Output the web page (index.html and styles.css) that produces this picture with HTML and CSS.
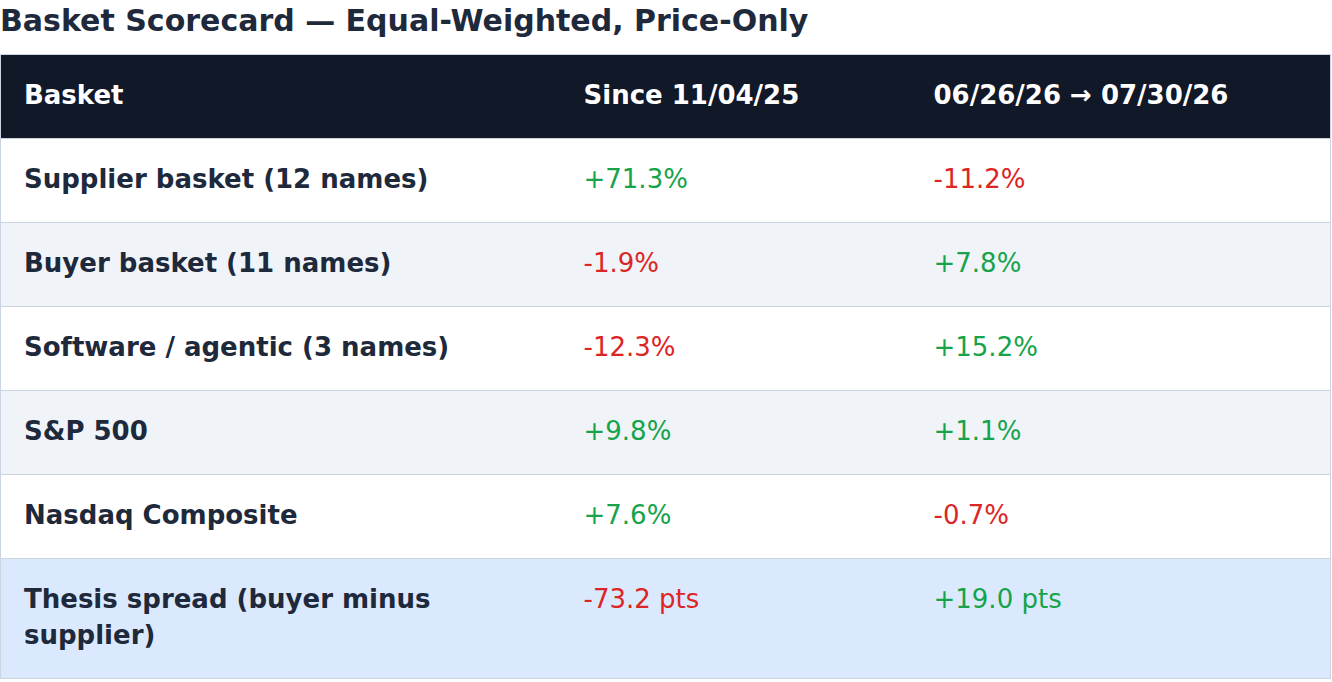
FILE: index.html
```html
<!DOCTYPE html>
<html lang="en">
<head>
<meta charset="utf-8">
<title>Basket Scorecard</title>
<link rel="stylesheet" href="styles.css">
</head>
<body>
<h1 class="title">Basket Scorecard — Equal-Weighted, Price-Only</h1>
<table class="scorecard">
  <colgroup>
    <col class="c1"><col class="c2"><col class="c3">
  </colgroup>
  <thead>
    <tr><th>Basket</th><th>Since 11/04/25</th><th>06/26/26 → 07/30/26</th></tr>
  </thead>
  <tbody>
    <tr><td class="name">Supplier basket (12 names)</td><td class="pos">+71.3%</td><td class="neg">-11.2%</td></tr>
    <tr class="alt"><td class="name">Buyer basket (11 names)</td><td class="neg">-1.9%</td><td class="pos">+7.8%</td></tr>
    <tr><td class="name">Software / agentic (3 names)</td><td class="neg">-12.3%</td><td class="pos">+15.2%</td></tr>
    <tr class="alt"><td class="name">S&amp;P 500</td><td class="pos">+9.8%</td><td class="pos">+1.1%</td></tr>
    <tr><td class="name">Nasdaq Composite</td><td class="pos">+7.6%</td><td class="neg">-0.7%</td></tr>
    <tr class="spread"><td class="name">Thesis spread (buyer minus supplier)</td><td class="neg">-73.2 pts</td><td class="pos">+19.0 pts</td></tr>
  </tbody>
</table>
</body>
</html>
```
FILE: styles.css
```css
html, body {
  margin: 0;
  padding: 0;
  background: #ffffff;
}
body {
  font-family: "DejaVu Sans", Verdana, sans-serif;
  color: #1e293b;
}
.title {
  margin: 3px 0 16px;
  font-size: 30px;
  font-weight: bold;
  line-height: normal;
  color: #1e293b;
}
.scorecard {
  border-collapse: collapse;
  border: 1px solid #cbd5e1;
  width: 1331px;
  table-layout: fixed;
  font-size: 26px;
  line-height: 36px;
}
.c1 { width: 560px; }
.c2 { width: 350px; }
.scorecard th,
.scorecard td {
  border-top: 1px solid #cbd5e1;
  border-bottom: 1px solid #cbd5e1;
  border-left: none;
  border-right: none;
  padding: 22px 24px 25px 23px;
  text-align: left;
  vertical-align: top;
}
.scorecard th {
  background: #111827;
  color: #ffffff;
  font-weight: bold;
}
.scorecard td { background: #ffffff; }
.scorecard tr.alt td { background: #f0f4f9; }
.scorecard tr.spread td { background: #dbe9fe; }
.scorecard td.name {
  font-weight: bold;
  color: #1e293b;
}
.pos { color: #16a34a; }
.neg { color: #dc2626; }
```
